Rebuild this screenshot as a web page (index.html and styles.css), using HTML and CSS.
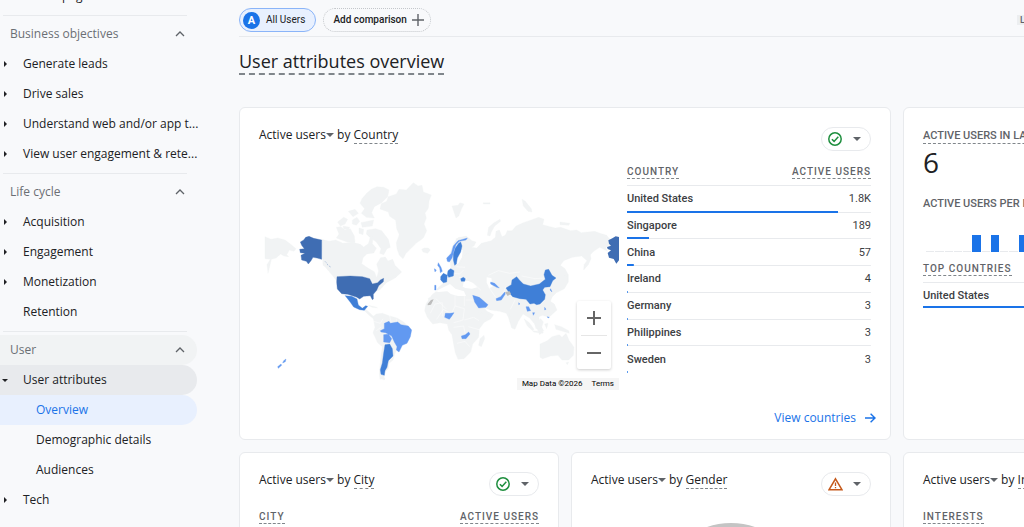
FILE: index.html
```html
<!DOCTYPE html>
<html lang="en">
<head>
<meta charset="utf-8">
<title>User attributes overview</title>
<link rel="stylesheet" href="styles.css">
</head>
<body>
<svg class="defs" aria-hidden="true">
  <symbol id="chevron" viewBox="0 0 10 6"><path d="M1 5l4-4 4 4" fill="none" stroke="#5f6368" stroke-width="1.3"/></symbol>
  <symbol id="caret" viewBox="0 0 8 4"><path d="M0 0h8L4 4z" fill="#5f6368"/></symbol>
  <symbol id="check" viewBox="0 0 14 14"><circle cx="7" cy="7" r="6.2" fill="none" stroke="#1e8e3e" stroke-width="1.5"/><path d="M3.9 7.2l2.2 2.2 4.2-4.6" fill="none" stroke="#1e8e3e" stroke-width="1.5"/></symbol>
  <symbol id="warn" viewBox="0 0 16 14"><path d="M8 1.5L14.8 13H1.2z" fill="none" stroke="#c5591b" stroke-width="1.6"/><path d="M8 5.5v3.7M8 10.2v1.4" stroke="#c5591b" stroke-width="1.4"/></symbol>
</svg>
<div class="page">
  <nav class="sidebar" aria-label="Reports">
    <a class="item top" href="#">Realtime pages</a>
    <section class="group">
      <button class="group-head">Business objectives<svg class="chev"><use href="#chevron"/></svg></button>
      <a class="item parent" href="#">Generate leads</a>
      <a class="item parent" href="#">Drive sales</a>
      <a class="item parent" href="#">Understand web and/or app t...</a>
      <a class="item parent" href="#">View user engagement &amp; rete...</a>
    </section>
    <section class="group">
      <button class="group-head">Life cycle<svg class="chev"><use href="#chevron"/></svg></button>
      <a class="item parent" href="#">Acquisition</a>
      <a class="item parent" href="#">Engagement</a>
      <a class="item parent" href="#">Monetization</a>
      <a class="item" href="#">Retention</a>
    </section>
    <section class="group">
      <button class="group-head hovered">User<svg class="chev"><use href="#chevron"/></svg></button>
      <a class="item parent open" href="#">User attributes</a>
      <a class="item child current" href="#">Overview</a>
      <a class="item child" href="#">Demographic details</a>
      <a class="item child" href="#">Audiences</a>
      <a class="item parent" href="#">Tech</a>
    </section>
  </nav>

  <main class="main">
    <header class="topbar">
      <button class="chip selected"><span class="avatar">A</span>All Users</button>
      <button class="chip add">Add comparison<svg class="plus" viewBox="0 0 12 12"><path d="M6 0v12M0 6h12" stroke="#5f6368" stroke-width="1.4"/></svg></button>
      <div class="dates"><span class="badge">Last 28 days</span></div>
    </header>
    <h1 class="title"><span>User attributes overview</span></h1>

    <div class="grid">
      <section class="card wide">
        <div class="card-head">
          <h2><button class="metric">Active users<svg class="caret"><use href="#caret"/></svg></button> by <span class="dim">Country</span></h2>
          <button class="status" aria-label="Data quality"><svg class="state"><use href="#check"/></svg><svg class="caret"><use href="#caret"/></svg></button>
        </div>
        <div class="country">
          <div class="map">
            <svg class="world" viewBox="12 0 1080 660" role="img" aria-label="Active users by country">
              <g fill="#f1f3f4" stroke="#f1f3f4" stroke-width="1" stroke-linejoin="round">
                <path d="M475 38l14 10 12-2 4 20 24 9-7 18-2 22-10 14 4 15-7 18 8 20-10 22-22 16-18 18-12 12-9 16-11-10-7-20-2-18 9-24-8-18-3-25-18-12-4-13-25-9 4-16 16-7 5-14 24-8 8-14 22 2z"/>
                <path d="M335 70l14-12 17-8 20 2 16 8-4 20-18 18-22 12-8 18 8 16-24-2-15-12 10-14-14-16 6-14z"/>
                <path d="M280 124l20-6 10 12-16 10zM248 156l18-14 12 6-8 14-14 6zM292 150l14-8 8 12-10 12-12-4zM318 158l38-8-4 18-30 4zM264 168l20 4-4 8-14-4zM312 174l14 4-2 16-12-4z"/>
                <path d="M244 172l14-2 12 10 16-4 12 22 2 20-24-2-32-12 8-12z"/>
                <path d="M336 180l26-4 18 6 20 26 6 24-10 4-10 18-12-4 4-14-14-20-20-14-10-10z"/>
                <path d="M328 232l18 4 6 12-16 2z"/>
                <path d="M200 208l22 6 20-4 22 10 28-3 24 6 10 8 14-10 8-26 6 4-2 22 12 14-8 14-20 2-12 12-4 18 20 14 18 10 7 18 6-20-6-20 12-20 14-2 8 12 14-5 7 18 20 20-20 18-26 14-20 22-12 4-16-18-20-6h-76l-16-22-24-28-6-4z"/>
                <path d="M396 316l14-6 2 10-12 4zM412 318l10-2v6z"/>
                <path d="M30 200l18 8 20-4 22 6 16 12 17 14-6 8-14-4-8 14 6 6-14-2-10-6-14 12-14 4-4 18-6 24-3-26 10-16-16-2z"/>
                <path d="M500 238l8-4h12l6 6-8 10-14-4z"/>
                <path d="M322 410l10 8 12 10 10 10 8 4-6 4-14-10-14-14zM340 406l20 4 8 4-16-2z"/>
                <path d="M354 440l10-8 18-2 22 8 22 6 20 12 14 14-40 80-6 20-12 10-2 16-10 10-3 18-12 4-2-18 5-52 4-28-14-12-14-30 6-16z"/>
                <path d="M380 622l10 2-2 6-10-4z"/>
              </g>
              <g fill="#f1f3f4" stroke="#f1f3f4" stroke-linejoin="round" transform="translate(525 0)">
                <path d="M66 108l18-2 6-8 12 4-8 16-8 20-8 6-6-18zM172 196l4-24 16-14 18-10 2 6-18 14-10 18-4 12zM276 88l10 6 18 22 2 10-12-2-14-16zM390 156l30 4-4 6-26-2zM160 98h20v4h-20z"/>
                <path d="M78 206l30-8 18 14 12 4-6 12-10 4 18 2 14-14 30-8 12-10 2-18 10-4 8 20 10-4 6-14h14l12-14 22-10 18-6 28-10 16 6-4 16 22 6 16 4 16-2 30 10 18-2 14 8 40-4 16 6 20 6 14 18 13 12-6 4-16-4-8 8 6 10-24-12-18 12-10 10 2 12-8 18-14 16 1-16 9-12-16-14-28 4-26 10-10 14 14 10 10 18 0 22-12 20-24 12-12 12-6 14 12 8 8 18-24 22-20-6-10 4 2 20 12 22-12 12-12-28-18-22-20-12-14 22-10 24-10-4-10-32-6-12-20-6-28-4-20-8 10 12 20 10-10 14-38 18-12-22-16-36-26-4-16-2-12-12-14 4-12-14-12 12-12 10-14-2-2-16 18-4 10-26 12-10 18-16 8-24 14-10z"/>
                <path d="M58 256l14-38 14-16 24-2 16 18-2 24-20 14-22 42-18 6z"/>
                <path d="M6 374l16-12 26 0 16-2 8 14 24 4 18-2 12 8 22 46 30-2-10 22-20 26-2 26-18 20-6 24-20 20-18 2-8-20-6-30-4-24-10-14-4-18-22-4-22 4-16-20-8-20 4-20z"/>
                <path d="M150 506l12-10 2 10-10 24-8-4zM238 428l6 10-5 4z"/>
                <path d="M282 446l16 12 14 20-4 4-16-14zM314 462l18-16 8 10-6 18-16 2zM310 482l30 4-2 4-28-4zM344 462l10-2-4 16zM374 464l20 6 22 12 2 8-20-6-20-6z"/>
                <path d="M330 522l22-10 14-12 22-6 8 8 12-12 10 22 14 20-2 24-14 14-20 0-12-14-22 2-24 8-8-4 0-22z"/>
                <path d="M408 578l8-2-4 8zM388 346l12-8 4-24 8 8-4 22-26 16-10 2 4-8z"/>
              </g>
              <g fill="#fff" transform="translate(525 0)">
                <path d="M98 350l4-16 12-2 14 6 14 14-16 4-20-2zM170 322l14 2 4 26-10 4-8-16zM86 236l12 4-2 22-12 20-6-2 4-24zM16 364l20-10 24-12 16 14 26 8 6 14-24 0-22-6-10-8-26 2z"/>
              </g>
              <g fill="none" stroke="#fff" stroke-width="1.4">
                <path d="M356 454l20 6 8-14M364 482l14-10M404 438l4 18M424 446v10M526 430l14-28 22-4v40M543 386l30 30M545 448l20-30 22 12M600 374v34l28 8M628 408v-34M600 408l-10 22M628 416l-4 34-28 8M628 450l28-8 16 10M596 472l30-4 4 22M606 520l24-6 14 16M632 390h28M640 470l36 10M655 340l22 20M700 350l22 32M752 350l-12 34M780 390l-14 28M700 316l30-14 34 8 30-4M800 318l40 8 28-2M626 300l-12 12-18-2M604 290l26 2M612 322l24 4"/>
              </g>
              <g fill="#3f6db3" stroke="#3f6db3">
                <path d="M136 216l10-6 6-8 10-3 14 6 24 5v58l-14-4-12-2-6 10-8 10-6-8-14-4-2-14 12-6-14-2-2-10 14-2-8-10z"/>
                <path d="M210 274l4 4M216 281l3 5M222 288l5 3"/>
                <path d="M246 320l40-2 36 2 22 6 8 16 16-4 8-8 10-5-1 10-14 12-6 14-10 12 0 14-3 2-6-12-20 2-12 8-10-6-26-8-18-2-13-14-2-20z"/>
              </g>
              <path d="M1092 201l-10-2-10 6-12 6 2 10 6 6-12 4 2 6 10 4-10 8 4 14 14 4 8 14 8-10z" fill="#3f6db3"/>
              <g fill="#3f7fd7" stroke="#3f7fd7">
                <path d="M270 377l20 2 16 8 4 18 12 10 10-8 6 2-10 12-14-2-18-8-10-14-6-8-8-10z"/>
                <path d="M390 524l14-2 8 14 2 22-14 14-4 20-6 10-2 14-10-3-2-14 6-20 4-30z"/>
                <path transform="translate(525 0)" d="M74 286l-4-16 0-18 6-18 10-14 6-4 4 12-4 18-10 18-3 18zM32 320l8-10 12 6-2 20-10 2-8-8zM54 302l8-6 10 6-2 16-14 4-4-8zM92 326l8-4 6 4-2 8-10 0z"/>
                <path transform="translate(525 0)" d="M228 354l16-10 2-14 14-10 8 10 12 12 22 6 26-6 18-14-4-14 4-14 10-2 10 18 12 8-10 8-8 18-16 2-6 8 8 14-2 14-14 14-10 2-8-4-12 2-12-14-18-2-22-6-12-14z"/>
              </g>
              <g fill="#6299f1" stroke="#6299f1">
                <path d="M376 482l12-6 0-16 14-6 4 6 22-4 10 8 22 4 10 12-4 20-10 20-14 6-10 20-8-6 2-10-8-14-8-18-18-10-14-2zM386 494l14-2 10 14-6 12-18-2z"/>
                <path d="M68 590l10-8 2 4-10 9zM86 572l7-5-2 8-8 4zM538 296l6 4-4 6zM550 278l8 14 4 12-6 4-2-14-6-8zM539 346h4v14h-4z"/>
                <path transform="translate(525 0)" d="M50 264l14-14 6-22 14-16 28-8-4 6-20 4-10 10-6 18-6 22-8 12-6-2zM128 376l20 6 26 22-6 8-22 2-12-18zM46 430h14l12-2-8 12-6 8-14-6zM94 498l12-4 10-8 4 6-12 14-12 0zM182 336l12 4 14 14-8-2-18-10zM198 386l14-6 12-14 2 6-12 18-14 2zM288 410l8 0 6 12-10 2zM362 356l4 10-6-6zM308 428l6 0-4 8zM266 398l4 4-4 2zM344 412l4 6-4 2zM352 440l6 2-4 2z"/>
              </g>
              <path d="M518 402l10-12 8-2-8 16-10 2zM750 366l14-2 4 8-10 6z" fill="#bdbdbd"/>
            </svg>
            <div class="zoom">
              <button aria-label="Zoom in"><svg viewBox="0 0 14 14"><path d="M7 0v14M0 7h14" stroke="#666" stroke-width="2"/></svg></button>
              <button aria-label="Zoom out"><svg viewBox="0 0 14 14"><path d="M0 7h14" stroke="#666" stroke-width="2"/></svg></button>
            </div>
            <div class="credit"><span>Map Data ©2026</span><a href="#">Terms</a></div>
          </div>
          <table class="table">
            <thead><tr><th><span>Country</span></th><th><span>Active users</span></th></tr></thead>
            <tbody>
              <tr style="--share:86.6%"><td>United States</td><td>1.8K</td></tr>
              <tr style="--share:9.2%"><td>Singapore</td><td>189</td></tr>
              <tr style="--share:2.8%"><td>China</td><td>57</td></tr>
              <tr style="--share:.3%"><td>Ireland</td><td>4</td></tr>
              <tr style="--share:.3%"><td>Germany</td><td>3</td></tr>
              <tr style="--share:.3%"><td>Philippines</td><td>3</td></tr>
              <tr style="--share:.3%"><td>Sweden</td><td>3</td></tr>
            </tbody>
          </table>
        </div>
        <a class="more" href="#">View countries<svg viewBox="0 0 11 10"><path d="M0 5h10M5.6.7L10 5 5.6 9.3" fill="none" stroke="#1a73e8" stroke-width="1.4"/></svg></a>
      </section>

      <section class="card realtime">
        <h3 class="label"><span class="dotted">Active users in last 30 minutes</span></h3>
        <p class="count">6</p>
        <h3 class="label">Active users per minute</h3>
        <div class="bars">
          <i></i><i></i><i></i><i></i><i></i><i class="on"></i><i></i><i class="on"></i><i></i><i></i><i class="on"></i><i></i><i></i><i></i><i></i><i></i><i></i><i></i><i></i><i></i><i></i><i></i><i></i><i></i><i></i><i></i><i></i><i></i><i></i><i></i>
        </div>
        <table class="table">
          <thead><tr><th><span>Top countries</span></th><th><span>Active users</span></th></tr></thead>
          <tbody><tr style="--share:100%"><td>United States</td><td>6</td></tr></tbody>
        </table>
      </section>

      <section class="card">
        <div class="card-head">
          <h2><button class="metric">Active users<svg class="caret"><use href="#caret"/></svg></button> by <span class="dim">City</span></h2>
          <button class="status" aria-label="Data quality"><svg class="state"><use href="#check"/></svg><svg class="caret"><use href="#caret"/></svg></button>
        </div>
        <table class="table">
          <thead><tr><th><span>City</span></th><th><span>Active users</span></th></tr></thead>
        </table>
      </section>

      <section class="card">
        <div class="card-head">
          <h2><button class="metric">Active users<svg class="caret"><use href="#caret"/></svg></button> by <span class="dim">Gender</span></h2>
          <button class="status" aria-label="Data quality warning"><svg class="state warn"><use href="#warn"/></svg><svg class="caret"><use href="#caret"/></svg></button>
        </div>
        <svg class="donut" viewBox="0 0 140 140"><circle cx="70" cy="70" r="58" fill="none" stroke="#c4c4c4" stroke-width="24"/></svg>
      </section>

      <section class="card">
        <div class="card-head">
          <h2><button class="metric">Active users<svg class="caret"><use href="#caret"/></svg></button> by <span class="dim">Interests</span></h2>
        </div>
        <table class="table">
          <thead><tr><th><span>Interests</span></th><th><span>Active users</span></th></tr></thead>
        </table>
      </section>
    </div>
  </main>
</div>
</body>
</html>
```
FILE: styles.css
```css
*, *::before { box-sizing: border-box; }
html, body { height: 100%; margin: 0; overflow: hidden; }
body { background: #f8f9fb; color: #202124; font: 11px/16px Roboto, sans-serif; }
button { padding: 0; border: 0; background: none; color: inherit; font: inherit; cursor: pointer; }
a { color: inherit; text-decoration: none; }
h1, h2, h3, p { margin: 0; font-weight: 400; }
svg { flex: none; }
.defs { position: absolute; width: 0; height: 0; }

.page { display: flex; gap: 42px; height: 100vh; overflow: hidden; }

.sidebar { flex: none; width: 197px; margin-top: -19px; font: 500 12px/16px "Open Sans", sans-serif; }
.item, .group-head { display: flex; align-items: center; width: 100%; height: 30px; border-radius: 0 15px 15px 0; }
.item { padding-left: 23px; white-space: nowrap; }
.item.top { padding-left: 10px; }
.item.child { padding-left: 36px; }
.item.parent { padding-left: 4px; }
.item.parent::before { content: ""; width: 3px; margin-right: 16px; border: solid transparent; border-width: 3px 0 3px 3px; border-left-color: #202124; }
.item.open { padding-left: 2px; background: #e8eaed; }
.item.open::before { width: 6px; margin-right: 15px; border-width: 3px 3px 0; border-color: #202124 transparent; }
.item.current { background: #e8f0fe; color: #1a73e8; }
.group { position: relative; margin-top: 4px; padding-top: 4px; }
.group::before { content: ""; position: absolute; top: 0; left: 3px; right: 10px; height: 1px; background: #e8eaed; }
.group-head { justify-content: space-between; padding: 0 12px 0 10px; color: #6b6f74; }
.group-head.hovered { background: #f1f3f4; }
.chev { width: 10px; height: 6px; }

.main { flex: 1 0 984px; }
.topbar { display: flex; align-items: center; gap: 7px; height: 37px; padding-top: 4px; border-bottom: 1px solid #e8eaed; }
.chip { display: flex; align-items: center; height: 24px; border-radius: 12px; }
.chip.selected { gap: 6px; padding: 0 10px 0 3px; border: 1px solid #8ab4f8; background: #e8f0fe; font-size: 10px; }
.avatar { width: 17px; height: 17px; border-radius: 50%; background: #1a73e8; color: #fff; font: 700 11px/17px Roboto, sans-serif; text-align: center; }
.chip.add { gap: 5px; padding: 0 6px 0 9px; border: 1px dotted #c4c7cb; font-weight: 500; font-size: 10px; }
.plus { width: 12px; height: 12px; }
.dates { width: 206px; margin-left: auto; }
.badge { padding: 0 3px; background: #eceef0; color: #5f6368; font: 500 9px/13px Roboto, sans-serif; text-transform: uppercase; }

.title { height: 70px; padding-top: 12px; font: 400 18px/24px "Open Sans", sans-serif; }
.title span { display: inline-block; border-bottom: 2px dashed #80868b; }

.grid { display: grid; grid-template-columns: repeat(3, minmax(320px, 1fr)); grid-template-rows: 333px auto; gap: 12px; }
.card { min-height: 160px; padding: 19px; border: 1px solid #e8eaed; border-radius: 6px; background: #fff; }
.wide { grid-column: span 2; display: flex; flex-direction: column; }
.card-head { display: flex; justify-content: space-between; height: 38px; }
.card-head h2 { font: 400 12px/16px "Open Sans", sans-serif; }
.metric { font-weight: 500; }
.caret { width: 8px; height: 4px; }
.metric .caret { vertical-align: 2px; }
.dim { display: inline-block; border-bottom: 1px dashed #80868b; }
.status { display: flex; align-items: center; justify-content: space-between; width: 50px; height: 24px; padding: 0 9px 0 6px; border: 1px solid #e8eaed; border-radius: 12px; }
.state { width: 14px; height: 14px; }
.state.warn { width: 15px; }

.country { display: flex; gap: 8px; }
.map { position: relative; flex: 1; }
.world { display: block; width: 100%; margin-top: 5px; }
.zoom { position: absolute; right: 8px; top: 136px; width: 34px; padding: 0 4px; border-radius: 2px; background: #fff; box-shadow: 0 1px 3px #0003; }
.zoom button { display: grid; place-items: center; width: 100%; height: 34px; }
.zoom button + button { border-top: 1px solid #e6e6e6; }
.zoom svg { width: 14px; height: 14px; }
.credit { position: absolute; right: 0; top: 213px; display: flex; gap: 9px; padding: 0 5px; background: #f5f5f5; color: #000; font: 400 8px/12px Roboto, sans-serif; }

.table { width: 100%; border-spacing: 0; }
.country .table { flex: none; width: 244px; height: 208px; }
.table th { height: 21px; padding: 0; border-bottom: 1px solid #e8eaed; color: #5f6368; font: 500 10px/13px Roboto, sans-serif; letter-spacing: 1px; text-align: left; text-transform: uppercase; vertical-align: top; }
.table th span, .dotted { display: inline-block; border-bottom: 1px dashed #80868b; }
.table th:last-child, .table td:last-child { text-align: right; }
.table td { height: 25px; padding: 0; color: #3c4043; }
.table td:first-child { font-weight: 500; }
.table tbody tr { background: linear-gradient(#1a73e8, #1a73e8) left bottom / var(--share) 2px no-repeat, linear-gradient(#e8eaed, #e8eaed) left bottom / 100% 1px no-repeat; }
.table tbody tr:last-child { background: linear-gradient(#1a73e8, #1a73e8) left bottom / var(--share) 2px no-repeat; }

.more { display: flex; align-items: center; align-self: flex-end; gap: 9px; margin: auto -5px -6px 0; color: #1a73e8; font: 500 12px/16px "Open Sans", sans-serif; }
.more svg { width: 11px; height: 10px; }

.label { color: #5f6368; font: 500 11px/14px Roboto, sans-serif; text-transform: uppercase; white-space: nowrap; }
.realtime { padding-top: 21px; }
.count { margin: 0 0 17px; font: 400 28px/36px "Open Sans", sans-serif; }
.bars { display: flex; align-items: flex-end; gap: 1px; height: 41px; margin: 0 0 10px 3px; }
.bars i { flex: 1; height: 1px; background: #e8eaed; }
.bars .on { height: 17px; background: #1a73e8; }
.donut { display: block; width: 140px; margin: 13px auto 0; }
```
